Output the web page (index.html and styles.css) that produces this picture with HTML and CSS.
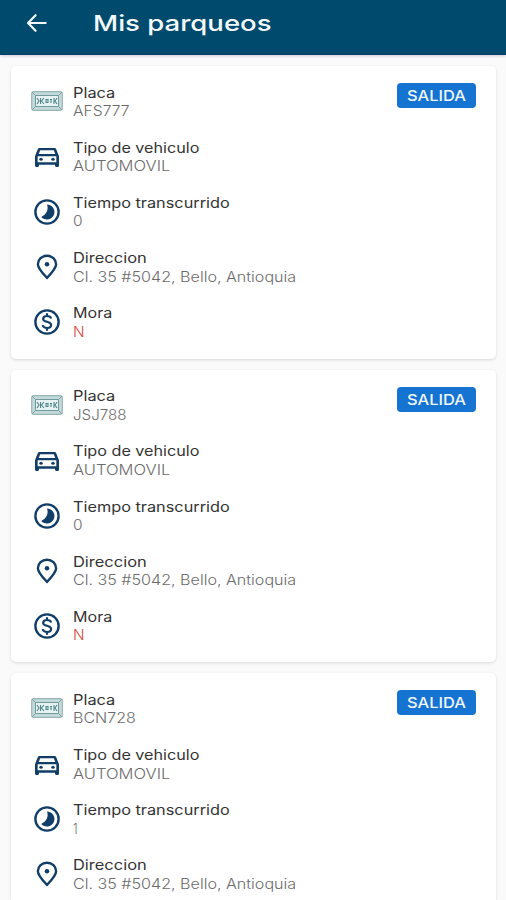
FILE: index.html
```html
<!DOCTYPE html>
<html lang="es">
<head>
<meta charset="utf-8">
<title>Mis parqueos</title>
<link rel="stylesheet" href="styles.css">
</head>
<body>
<svg class="defs" aria-hidden="true">
  <symbol id="plate" viewBox="0 0 32 20">
    <rect x=".7" y=".7" width="30.6" height="18.6" rx="2" fill="#c3dada" stroke="#9ab5b8" stroke-width="1.2"/>
    <rect x="4.5" y="4.5" width="23" height="11" fill="#e7f3f2" stroke="#6f999d" stroke-width="1"/>
    <path d="M1 1l4 4M31 1l-4 4M1 19l4-4M31 19l-4-4" stroke="#7fa3a6"/>
    <path d="M6 7l2 3-2 3M9.5 7v6M13 7l-2.5 3 2.5 3M15 8.5h2v3h-2zM19 8.5h2M20 8.5v3.5M23 7v6M26 7l-2 3 2 3" fill="none" stroke="#4d858a" stroke-width="1.1"/>
  </symbol>
  <symbol id="car" viewBox="3 4 18 16" preserveAspectRatio="none">
    <path fill="currentColor" d="M18.92 5.01C18.72 4.42 18.16 4 17.5 4h-11c-.66 0-1.21.42-1.42 1.01L3 11v8c0 .55.45 1 1 1h1c.55 0 1-.45 1-1v-1h12v1c0 .55.45 1 1 1h1c.55 0 1-.45 1-1v-8zM6.85 5.9h10.29l1.04 3.1H5.81zM19 16H5v-5h14z"/>
    <circle cx="7.5" cy="13.5" r="1.3" fill="currentColor"/><circle cx="16.5" cy="13.5" r="1.3" fill="currentColor"/>
  </symbol>
  <symbol id="time" viewBox="0 0 24 24">
    <circle cx="12" cy="12" r="9.3" fill="none" stroke="currentColor" stroke-width="1.9"/>
    <path fill="currentColor" d="M12 6c1.5 4-.4 8-4.6 9.9A6 6 0 1 0 12 6z"/>
  </symbol>
  <symbol id="pin" viewBox="0 0 24 24">
    <path fill="none" stroke="currentColor" stroke-width="1.9" d="M12 20.7C8.2 16.8 4.7 13.2 4.7 9.8a7.3 6.8 0 0 1 14.6 0c0 3.4-3.5 7-7.3 10.9z"/>
    <circle cx="12" cy="9.8" r="1.8" fill="currentColor"/>
  </symbol>
  <symbol id="money" viewBox="0 0 24 24">
    <circle cx="12" cy="12" r="9.3" fill="none" stroke="currentColor" stroke-width="1.9"/>
    <path fill="none" stroke="currentColor" stroke-width="1.7" d="M15.3 9.2C14.9 7.9 13.6 7.2 12 7.2c-1.8 0-3.1.9-3.1 2.3 0 3.1 6.4 1.6 6.4 4.9 0 1.4-1.4 2.4-3.2 2.4-1.9 0-3.2-.9-3.5-2.3M12 5v2.2M12 16.8V19"/>
  </symbol>
</svg>
<header class="bar">
  <svg class="back" viewBox="0 0 24 24"><path d="M22 12H3M11 3.5 2.8 12l8.2 8.5"/></svg>
  <h1><span class="fit" data-w="179">Mis parqueos</span></h1>
</header>
<main class="list" id="list"></main>
<script src="app.js"></script>
</body>
</html>
```
FILE: styles.css
```css
* { box-sizing: border-box; }
body {
  margin: 0;
  height: 900px;
  overflow: hidden;
  background: #fafafa;
  font-family: Inter, "Liberation Sans", sans-serif;
}
.defs { position: absolute; width: 0; height: 0; }
.bar {
  display: flex;
  align-items: center;
  height: 55px;
  padding: 0 0 9px 25px;
  background: #004a6d;
  border-bottom: 1px solid #063c66;
  box-shadow: 0 1px 3px rgba(0, 20, 60, .2);
  color: #f4fafc;
}
.back { width: 23px; height: 22px; margin-right: 45px; }
.back path { fill: none; stroke: currentColor; stroke-width: 2.4; stroke-linecap: round; stroke-linejoin: round; }
h1 { margin: 0; padding-top: 1px; font-size: 22px; font-weight: 450; line-height: 30px; }
.fit { display: inline-block; transform-origin: 0 50%; white-space: nowrap; }
.list { display: grid; gap: 11px; height: 845px; overflow: hidden; padding: 11px 10px 0 11px; }
.card {
  position: relative;
  height: 292.7px;
  padding: 17.5px 20px;
  border-radius: 5px;
  background: #fff;
  box-shadow: 0 1px 3px rgba(0, 0, 0, .14);
}
.card:last-child { height: 227px; border-radius: 5px 5px 0 0; }
.row { display: flex; align-items: center; height: 55.2px; padding-bottom: 18.2px; }
.icon { width: 30px; height: 30px; margin: -1px 11px 0 1px; flex: none; color: #103e68; }
.icon.plate { width: 32px; height: 20px; margin: -2px 10px 0 0; }
.icon.car { width: 24px; height: 19px; margin: 1px 14px 0 4px; }
.label, .value { height: 18.5px; line-height: 18.5px; font-size: 14px; }
.label { color: #333; }
.value { color: #6c6c6c; font-weight: 300; }
.value.alert { color: #d84a3c; }
.exit {
  position: absolute;
  top: 17px;
  right: 20px;
  width: 79px;
  height: 25px;
  padding: 0 0 0 10px;
  border: 0;
  border-radius: 4px;
  background: #1573d1;
  color: #f0f7ff;
  font: 450 14.5px/25px Inter, "Liberation Sans", sans-serif;
  text-align: left;
}
```
FILE: app.js
```js
const vehicles = [
  { plate: "AFS777", plateWidth: 57, time: "0", timeWidth: 10, debt: "N" },
  { plate: "JSJ788", plateWidth: 53, time: "0", timeWidth: 10, debt: "N" },
  { plate: "BCN728", plateWidth: 63, time: "1", timeWidth: 5 }
];
const text = (value, width) => `<span class="fit" data-w="${width}">${value}</span>`;
const row = (icon, label, labelWidth, value, valueWidth, tone = "") => `
  <div class="row">
    <svg class="icon ${icon}"><use href="#${icon}"/></svg>
    <div><div class="label">${text(label, labelWidth)}</div><div class="value ${tone}">${text(value, valueWidth)}</div></div>
  </div>`;
document.getElementById("list").innerHTML = vehicles.map(v => `
  <section class="card">
    ${row("plate", "Placa", 42, v.plate, v.plateWidth)}
    ${row("car", "Tipo de vehiculo", 127, "AUTOMOVIL", 97)}
    ${row("time", "Tiempo transcurrido", 157, v.time, v.timeWidth)}
    ${row("pin", "Direccion", 74, "Cl. 35 #5042, Bello, Antioquia", 223)}
    ${v.debt ? row("money", "Mora", 39, v.debt, 12, "alert") : ""}
    <button class="exit">${text("SALIDA", 59)}</button>
  </section>`).join("");
document.querySelectorAll(".fit").forEach(el => {
  el.style.transform = `scaleX(${el.dataset.w / el.offsetWidth})`;
});
```
